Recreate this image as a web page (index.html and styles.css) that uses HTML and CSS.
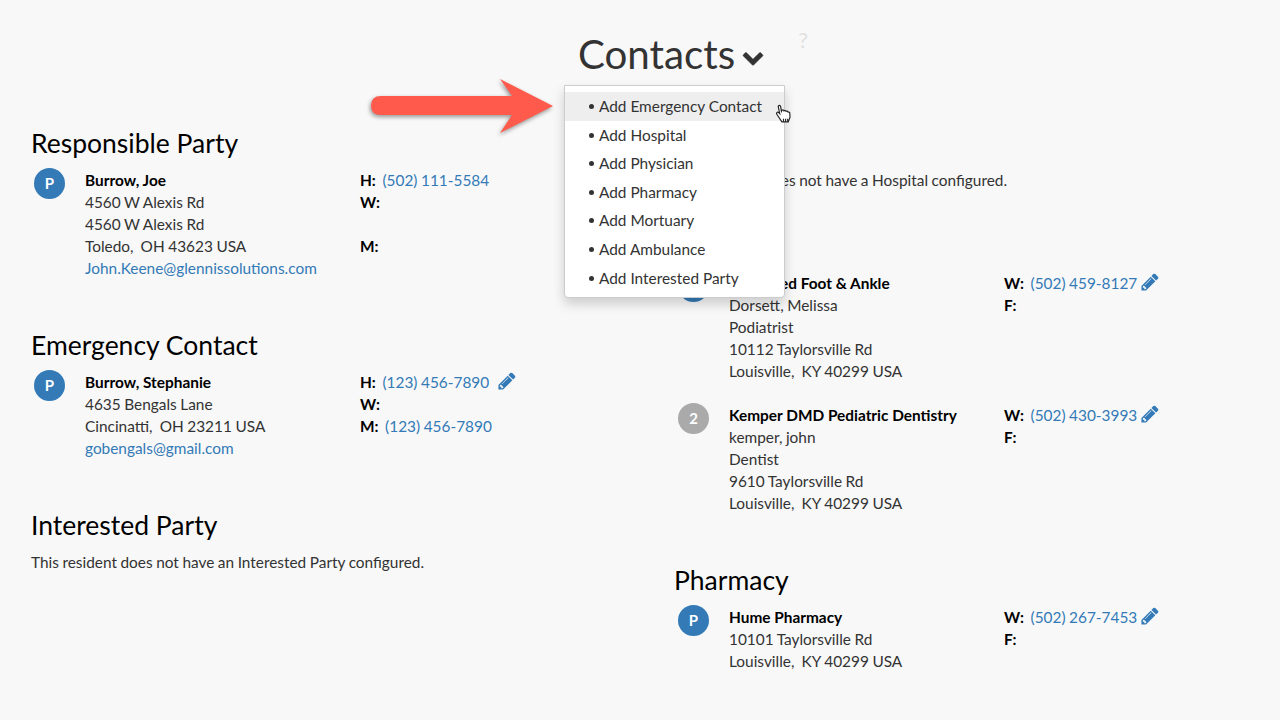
FILE: index.html
```html
<!DOCTYPE html>
<html lang="en">
<head>
    <meta charset="UTF-8">
    <meta name="viewport" content="width=device-width, initial-scale=1.0">
    <title>Contacts</title>
    <link rel="stylesheet" href="styles.css">
</head>
<body>

<header class="page-head">
    <h1 class="page-title">Contacts
        <svg class="chevron" viewBox="0 0 1792 1792"><path d="M1683 808l-742 741q-19 19-45 19t-45-19l-742-741q-19-19-19-45.500t19-45.500l166-165q19-19 45-19t45 19l531 531 531-531q19-19 45-19t45 19l166 165q19 19 19 45.500t-19 45.500z"/></svg>
    </h1>
    <span class="help">?</span>
</header>

<!-- Dropdown and callout -->
<ul class="menu">
    <li class="menu-item active">Add Emergency Contact</li>
    <li class="menu-item">Add Hospital</li>
    <li class="menu-item">Add Physician</li>
    <li class="menu-item">Add Pharmacy</li>
    <li class="menu-item">Add Mortuary</li>
    <li class="menu-item">Add Ambulance</li>
    <li class="menu-item">Add Interested Party</li>
</ul>

<svg class="arrow" viewBox="0 0 200 70" width="200" height="70">
    <path d="M11 17H142L130 0L183 27L130 54L142 36H11Q1 36 1 26.500Q1 17 11 17Z"/>
</svg>

<svg class="cursor" viewBox="0 0 16 20" width="17" height="21">
    <path d="M3 2.500c0-1.500 2-1.500 2.300 0l.7 4.500.5-1c1-.8 1.800-.3 2 .5.700-.7 1.600-.4 1.900.5.800-.5 1.700-.2 2 .7.800-.2 1.500.3 1.600 1.200l.2 3.600-1.700 4.500H6.500L1.800 10c-1.200-1.300.3-2.800 1.600-1.800l1 1z"/>
    <path class="cursor-lines" d="M8 14v3M10 14v3M12 14v3"/>
</svg>

<main class="columns">
    <div class="column">
        <section class="group">
            <h2 class="group-title">Responsible Party</h2>
            <div class="contact">
                <span class="badge">P</span>
                <div class="address">
                    <strong>Burrow, Joe</strong>
                    <div>4560 W Alexis Rd</div>
                    <div>4560 W Alexis Rd</div>
                    <div>Toledo,&nbsp; OH 43623 USA</div>
                    <a href="#">John.Keene@glennissolutions.com</a>
                </div>
                <div class="phones">
                    <div><b>H:</b><a href="#">(502) 111-5584</a></div>
                    <div><b>W:</b></div>
                    <div>&nbsp;</div>
                    <div><b>M:</b></div>
                </div>
            </div>
        </section>

        <section class="group">
            <h2 class="group-title">Emergency Contact</h2>
            <div class="contact">
                <span class="badge">P</span>
                <div class="address">
                    <strong>Burrow, Stephanie</strong>
                    <div>4635 Bengals Lane</div>
                    <div>Cincinatti,&nbsp; OH 23211 USA</div>
                    <a href="#">gobengals@gmail.com</a>
                </div>
                <div class="phones">
                    <div><b>H:</b><a href="#">(123) 456-7890</a>
                        <svg class="pencil wide" viewBox="0 0 1792 1792"><use href="#pencil-path"/></svg>
                    </div>
                    <div><b>W:</b></div>
                    <div><b>M:</b><a href="#">(123) 456-7890</a></div>
                </div>
            </div>
        </section>

        <section class="group">
            <h2 class="group-title">Interested Party</h2>
            <p class="empty">This resident does not have an Interested Party configured.</p>
        </section>
    </div>

    <div class="column column-right">
        <section class="group group-short">
            <h2 class="group-title">Hospital</h2>
            <p class="empty">This resident does not have a Hospital configured.</p>
        </section>

        <section class="group">
            <h2 class="group-title">Physician</h2>
            <div class="contact">
                <span class="badge">1</span>
                <div class="address">
                    <strong>Advanced Foot &amp; Ankle</strong>
                    <div>Dorsett, Melissa</div>
                    <div>Podiatrist</div>
                    <div>10112 Taylorsville Rd</div>
                    <div>Louisville,&nbsp; KY 40299 USA</div>
                </div>
                <div class="phones">
                    <div><b>W:</b><a href="#">(502) 459-8127</a>
                        <svg class="pencil" viewBox="0 0 1792 1792"><use href="#pencil-path"/></svg>
                    </div>
                    <div><b>F:</b></div>
                </div>
            </div>
            <div class="contact">
                <span class="badge badge-grey">2</span>
                <div class="address">
                    <strong>Kemper DMD Pediatric Dentistry</strong>
                    <div>kemper, john</div>
                    <div>Dentist</div>
                    <div>9610 Taylorsville Rd</div>
                    <div>Louisville,&nbsp; KY 40299 USA</div>
                </div>
                <div class="phones">
                    <div><b>W:</b><a href="#">(502) 430-3993</a>
                        <svg class="pencil" viewBox="0 0 1792 1792"><use href="#pencil-path"/></svg>
                    </div>
                    <div><b>F:</b></div>
                </div>
            </div>
        </section>

        <section class="group">
            <h2 class="group-title">Pharmacy</h2>
            <div class="contact">
                <span class="badge">P</span>
                <div class="address">
                    <strong>Hume Pharmacy</strong>
                    <div>10101 Taylorsville Rd</div>
                    <div>Louisville,&nbsp; KY 40299 USA</div>
                </div>
                <div class="phones">
                    <div><b>W:</b><a href="#">(502) 267-7453</a>
                        <svg class="pencil" viewBox="0 0 1792 1792"><use href="#pencil-path"/></svg>
                    </div>
                    <div><b>F:</b></div>
                </div>
            </div>
        </section>
    </div>
</main>

<svg class="defs" width="0" height="0">
    <defs>
        <path id="pencil-path" d="M491 1536l91-91-235-235-91 91v107h128v128h107zm523-928q0-22-22-22-10 0-17 7l-542 542q-7 7-7 17 0 22 22 22 10 0 17-7l542-542q7-7 7-17zm-54-192l416 416-832 832h-416v-416zm683 96q0 53-37 90l-166 166-416-416 166-165q36-38 90-38 53 0 91 38l235 234q37 39 37 91z"/>
    </defs>
</svg>

</body>
</html>
```

FILE: styles.css
```css
* {
    box-sizing: border-box;
}
html, body {
    height: 100%;
}
body {
    margin: 0;
    overflow: hidden;
    position: relative;
    background-color: #f8f8f8;
    color: #333;
    font-family: Lato, "Open Sans", sans-serif;
    font-size: 15.4px;
    line-height: 22px;
}
a {
    color: #337ab7;
    text-decoration: none;
}

/* Header */
.page-head {
    height: 128px;
    padding-top: 28px;
    padding-left: 106px;
    display: flex;
    justify-content: center;
    align-items: flex-start;
}
.page-title {
    margin: 0;
    font-size: 40.3px;
    line-height: 52px;
    font-weight: 400;
    color: #333;
    display: flex;
    align-items: center;
    gap: 7px;
}
.chevron {
    width: 22px;
    height: 22px;
    margin-top: 6px;
    fill: #333;
    stroke: #333;
    stroke-width: 50;
}
.help {
    margin: 1px 0 0 34px;
    font-size: 22px;
    color: #e0e0e0;
}

/* Columns */
.columns {
    display: grid;
    grid-template-columns: 643px 1fr;
    padding-left: 31px;
    word-spacing: -0.4px;
}
.group {
    margin-bottom: 51px;
}
.group-short {
    margin-bottom: 40px;
}
.group-title {
    margin: 0 0 11px;
    font-size: 26.500px;
    line-height: 30px;
    font-weight: 400;
    color: #000;
    word-spacing: 0;
}
.empty {
    margin: 0;
}
.contact {
    display: grid;
    grid-template-columns: 54px 275px 1fr;
}
.column-right .contact {
    grid-template-columns: 55px 275px 1fr;
}
.contact + .contact {
    margin-top: 22px;
}
.badge {
    width: 31px;
    height: 31px;
    margin: -1px 0 0 3px;
    border-radius: 50%;
    background-color: #337ab7;
    color: #fff;
    font-weight: 700;
    font-size: 15px;
    line-height: 31px;
    text-align: center;
}
.column-right .badge {
    margin-left: 4px;
}
.badge-grey {
    background-color: #aaa;
}
.address strong {
    color: #000;
    font-weight: 700;
    word-spacing: 0;
}
.address > * {
    display: block;
}
.phones b {
    color: #000;
    margin-right: 6.6px;
}
.pencil {
    width: 20px;
    height: 20px;
    margin-left: -1px;
    vertical-align: -3px;
    fill: #337ab7;
}
.pencil.wide {
    margin-left: 4px;
}

/* Dropdown */
.menu {
    position: absolute;
    left: 564px;
    top: 85px;
    width: 221px;
    height: 213px;
    margin: 0;
    padding: 6px 0 0;
    list-style: none;
    background-color: #fff;
    border: 1px solid #ccc;
    border-radius: 0 0 4px 4px;
    box-shadow: 0 6px 12px rgba(0,0,0,0.175);
}
.menu-item {
    height: 28.6px;
    line-height: 28px;
    padding-left: 34px;
    position: relative;
}
.menu-item::before {
    content: "";
    position: absolute;
    left: 24px;
    top: 12px;
    width: 5px;
    height: 5px;
    border-radius: 50%;
    background-color: #333;
}
.menu-item.active {
    background-color: #eee;
}

/* Callout arrow and hand */
.arrow {
    position: absolute;
    left: 370px;
    top: 79px;
    fill: #ff5a4b;
    filter: drop-shadow(-1px 2px 2px rgba(0,0,0,0.4));
}
.cursor {
    position: absolute;
    left: 775px;
    top: 104px;
    fill: #fff;
    stroke: #222;
    stroke-width: 1.1;
}
.cursor-lines {
    fill: none;
}
.defs {
    position: absolute;
}
```
